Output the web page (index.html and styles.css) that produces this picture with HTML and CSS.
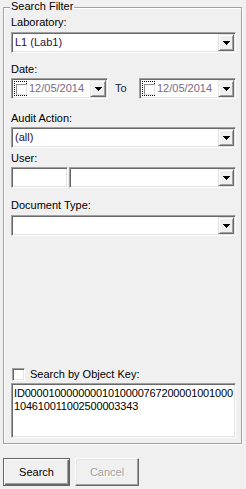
FILE: index.html
```html
<!DOCTYPE html>
<html lang="en">
<head>
  <meta charset="UTF-8" />
  <title>Audit Search</title>
  <link rel="stylesheet" href="styles.css">
</head>
<body>

  <div class="panel">
    <div class="group">
      <span class="group-title">Search Filter</span>

      <!-- Laboratory -->
      <div class="field field-lab">
        <span class="caption">Laboratory:</span>
        <div class="combo">
          <span class="combo-text">L1 (Lab1)</span>
          <span class="drop"><svg width="7" height="4" shape-rendering="crispEdges"><rect x="0" y="0" width="7" height="1"/><rect x="1" y="1" width="5" height="1"/><rect x="2" y="2" width="3" height="1"/><rect x="3" y="3" width="1" height="1"/></svg></span>
        </div>
      </div>

      <!-- Date range -->
      <div class="field field-date">
        <span class="caption">Date:</span>
        <div class="date-row">
          <div class="datebox">
            <span class="dt-check"><span class="dt-box"></span></span>
            <span class="dt-text">12/05/2014</span>
            <span class="drop"><svg width="7" height="4" shape-rendering="crispEdges"><rect x="0" y="0" width="7" height="1"/><rect x="1" y="1" width="5" height="1"/><rect x="2" y="2" width="3" height="1"/><rect x="3" y="3" width="1" height="1"/></svg></span>
          </div>
          <span class="to">To</span>
          <div class="datebox datebox-end">
            <span class="dt-check"><span class="dt-box"></span></span>
            <span class="dt-text">12/05/2014</span>
            <span class="drop"><svg width="7" height="4" shape-rendering="crispEdges"><rect x="0" y="0" width="7" height="1"/><rect x="1" y="1" width="5" height="1"/><rect x="2" y="2" width="3" height="1"/><rect x="3" y="3" width="1" height="1"/></svg></span>
          </div>
        </div>
      </div>

      <!-- Audit action -->
      <div class="field field-audit">
        <span class="caption">Audit Action:</span>
        <div class="combo">
          <span class="combo-text">(all)</span>
          <span class="drop"><svg width="7" height="4" shape-rendering="crispEdges"><rect x="0" y="0" width="7" height="1"/><rect x="1" y="1" width="5" height="1"/><rect x="2" y="2" width="3" height="1"/><rect x="3" y="3" width="1" height="1"/></svg></span>
        </div>
      </div>

      <!-- User -->
      <div class="field field-user">
        <span class="caption">User:</span>
        <div class="user-row">
          <div class="textbox"></div>
          <div class="combo combo-user">
            <span class="combo-text"></span>
            <span class="drop"><svg width="7" height="4" shape-rendering="crispEdges"><rect x="0" y="0" width="7" height="1"/><rect x="1" y="1" width="5" height="1"/><rect x="2" y="2" width="3" height="1"/><rect x="3" y="3" width="1" height="1"/></svg></span>
          </div>
        </div>
      </div>

      <!-- Document type -->
      <div class="field field-doc">
        <span class="caption">Document Type:</span>
        <div class="combo">
          <span class="combo-text"></span>
          <span class="drop"><svg width="7" height="4" shape-rendering="crispEdges"><rect x="0" y="0" width="7" height="1"/><rect x="1" y="1" width="5" height="1"/><rect x="2" y="2" width="3" height="1"/><rect x="3" y="3" width="1" height="1"/></svg></span>
        </div>
      </div>

      <!-- Object key -->
      <div class="objkey">
        <label class="check-row">
          <span class="checkbox"></span>
          <span>Search by Object Key:</span>
        </label>
        <textarea class="keybox" wrap="off" readonly>ID00001000000001010000767200001001000
104610011002500003343</textarea>
      </div>
    </div>

    <div class="buttons">
      <button class="btn btn-default">Search</button>
      <button class="btn" disabled>Cancel</button>
    </div>
  </div>

</body>
</html>
```

FILE: styles.css
```css
body {
  margin: 0;
  background-color: #f0f0f0;
  font-family: "Liberation Sans", Arial, sans-serif;
  font-size: 11px;
  line-height: 13px;
  color: #000;
}

.panel {
  padding: 0 4px 0 3px;
}

.group {
  position: relative;
  box-sizing: border-box;
  height: 437px;
  margin-top: 7px;
  padding: 8px 5px 5px 7px;
  border: 1px solid #a0a0a0;
  box-shadow: inset 1px 1px #fff, 1px 1px #fff;
  display: flex;
  flex-direction: column;
}

.group-title {
  position: absolute;
  top: -8px;
  left: 6px;
  padding: 0 1px;
  background: #f0f0f0;
}

.caption {
  display: block;
  height: 13px;
}

.field-date { margin-top: 10px; }
.field-audit { margin-top: 13px; }
.field-user { margin-top: 4px; }
.field-doc { margin-top: 11px; }

/* sunken 3d edge shared by inputs */
.combo,
.datebox,
.textbox,
.keybox {
  box-sizing: border-box;
  background: #fff;
  border: 1px solid;
  border-color: #a0a0a0 #fff #fff #a0a0a0;
  box-shadow: inset 1px 1px #696969, inset -1px -1px #e3e3e3;
}

.combo {
  display: flex;
  align-items: center;
  height: 21px;
  margin-top: 3px;
  padding: 1px;
}

.field-audit .combo,
.field-user .user-row {
  margin-top: 2px;
}

.combo-text {
  flex: 1;
  padding-left: 2px;
  color: #2a1040;
}

.drop {
  box-sizing: border-box;
  width: 16px;
  height: 17px;
  margin-left: auto;
  display: flex;
  align-items: center;
  justify-content: center;
  background: #f0f0f0;
  border: 1px solid;
  border-color: #e3e3e3 #696969 #696969 #e3e3e3;
  box-shadow: inset 1px 1px #fff, inset -1px -1px #a0a0a0;
}

.drop svg {
  fill: #000;
  margin-top: 1px;
}

.date-row {
  display: flex;
  align-items: center;
  margin-top: 2px;
}

.datebox {
  display: flex;
  align-items: center;
  width: 97px;
  height: 21px;
  padding: 1px;
}

.datebox-end {
  margin-left: auto;
}

.dt-check {
  box-sizing: border-box;
  width: 13px;
  height: 15px;
  margin-left: 1px;
  padding: 1px;
  border: 1px dotted #000;
}

.dt-box {
  display: block;
  box-sizing: border-box;
  width: 11px;
  height: 11px;
  margin: 1px 0 0 0;
  border: 1px solid;
  border-color: #8e8e8e #e3e3e3 #e3e3e3 #8e8e8e;
  background: #fff;
}

.dt-text {
  margin-left: 2px;
  color: #7a6a88;
}

.to {
  margin-left: 7px;
  color: #10204a;
}

.user-row {
  display: flex;
  gap: 1px;
}

.textbox {
  width: 57px;
  height: 21px;
}

.combo-user {
  flex: 1;
  margin-top: 0;
}

.objkey {
  margin-top: auto;
}

.check-row {
  display: flex;
  align-items: center;
  height: 13px;
  margin-left: 1px;
}

.checkbox {
  box-sizing: border-box;
  width: 13px;
  height: 13px;
  margin-right: 5px;
  background: #fff;
  border: 1px solid;
  border-color: #a0a0a0 #fff #fff #a0a0a0;
  box-shadow: inset 1px 1px #696969, inset -1px -1px #e3e3e3;
}

.keybox {
  display: block;
  width: 100%;
  height: 55px;
  margin: 2px 0 0;
  padding: 3px 2px 0 2px;
  font-family: "Liberation Sans", Arial, sans-serif;
  font-size: 11px;
  line-height: 13px;
  letter-spacing: -0.17px;
  color: #000;
  resize: none;
  overflow: hidden;
  outline: none;
}

.buttons {
  display: flex;
  gap: 5px;
  margin-top: 14px;
}

.btn {
  box-sizing: border-box;
  width: 64px;
  height: 28px;
  padding: 0;
  font-family: "Liberation Sans", Arial, sans-serif;
  font-size: 11px;
  color: #000;
  background: #f0f0f0;
  border: 1px solid;
  border-color: #fff #696969 #696969 #fff;
  box-shadow: inset -1px -1px #a0a0a0, inset 1px 1px #e3e3e3;
}

.btn-default {
  width: 67px;
  border-color: #646464;
  box-shadow: inset 1px 1px #fff, inset -1px -1px #696969, inset -2px -2px #a0a0a0;
}

.btn:disabled {
  color: #a0a0a0;
  text-shadow: 1px 1px #fff;
}
```
